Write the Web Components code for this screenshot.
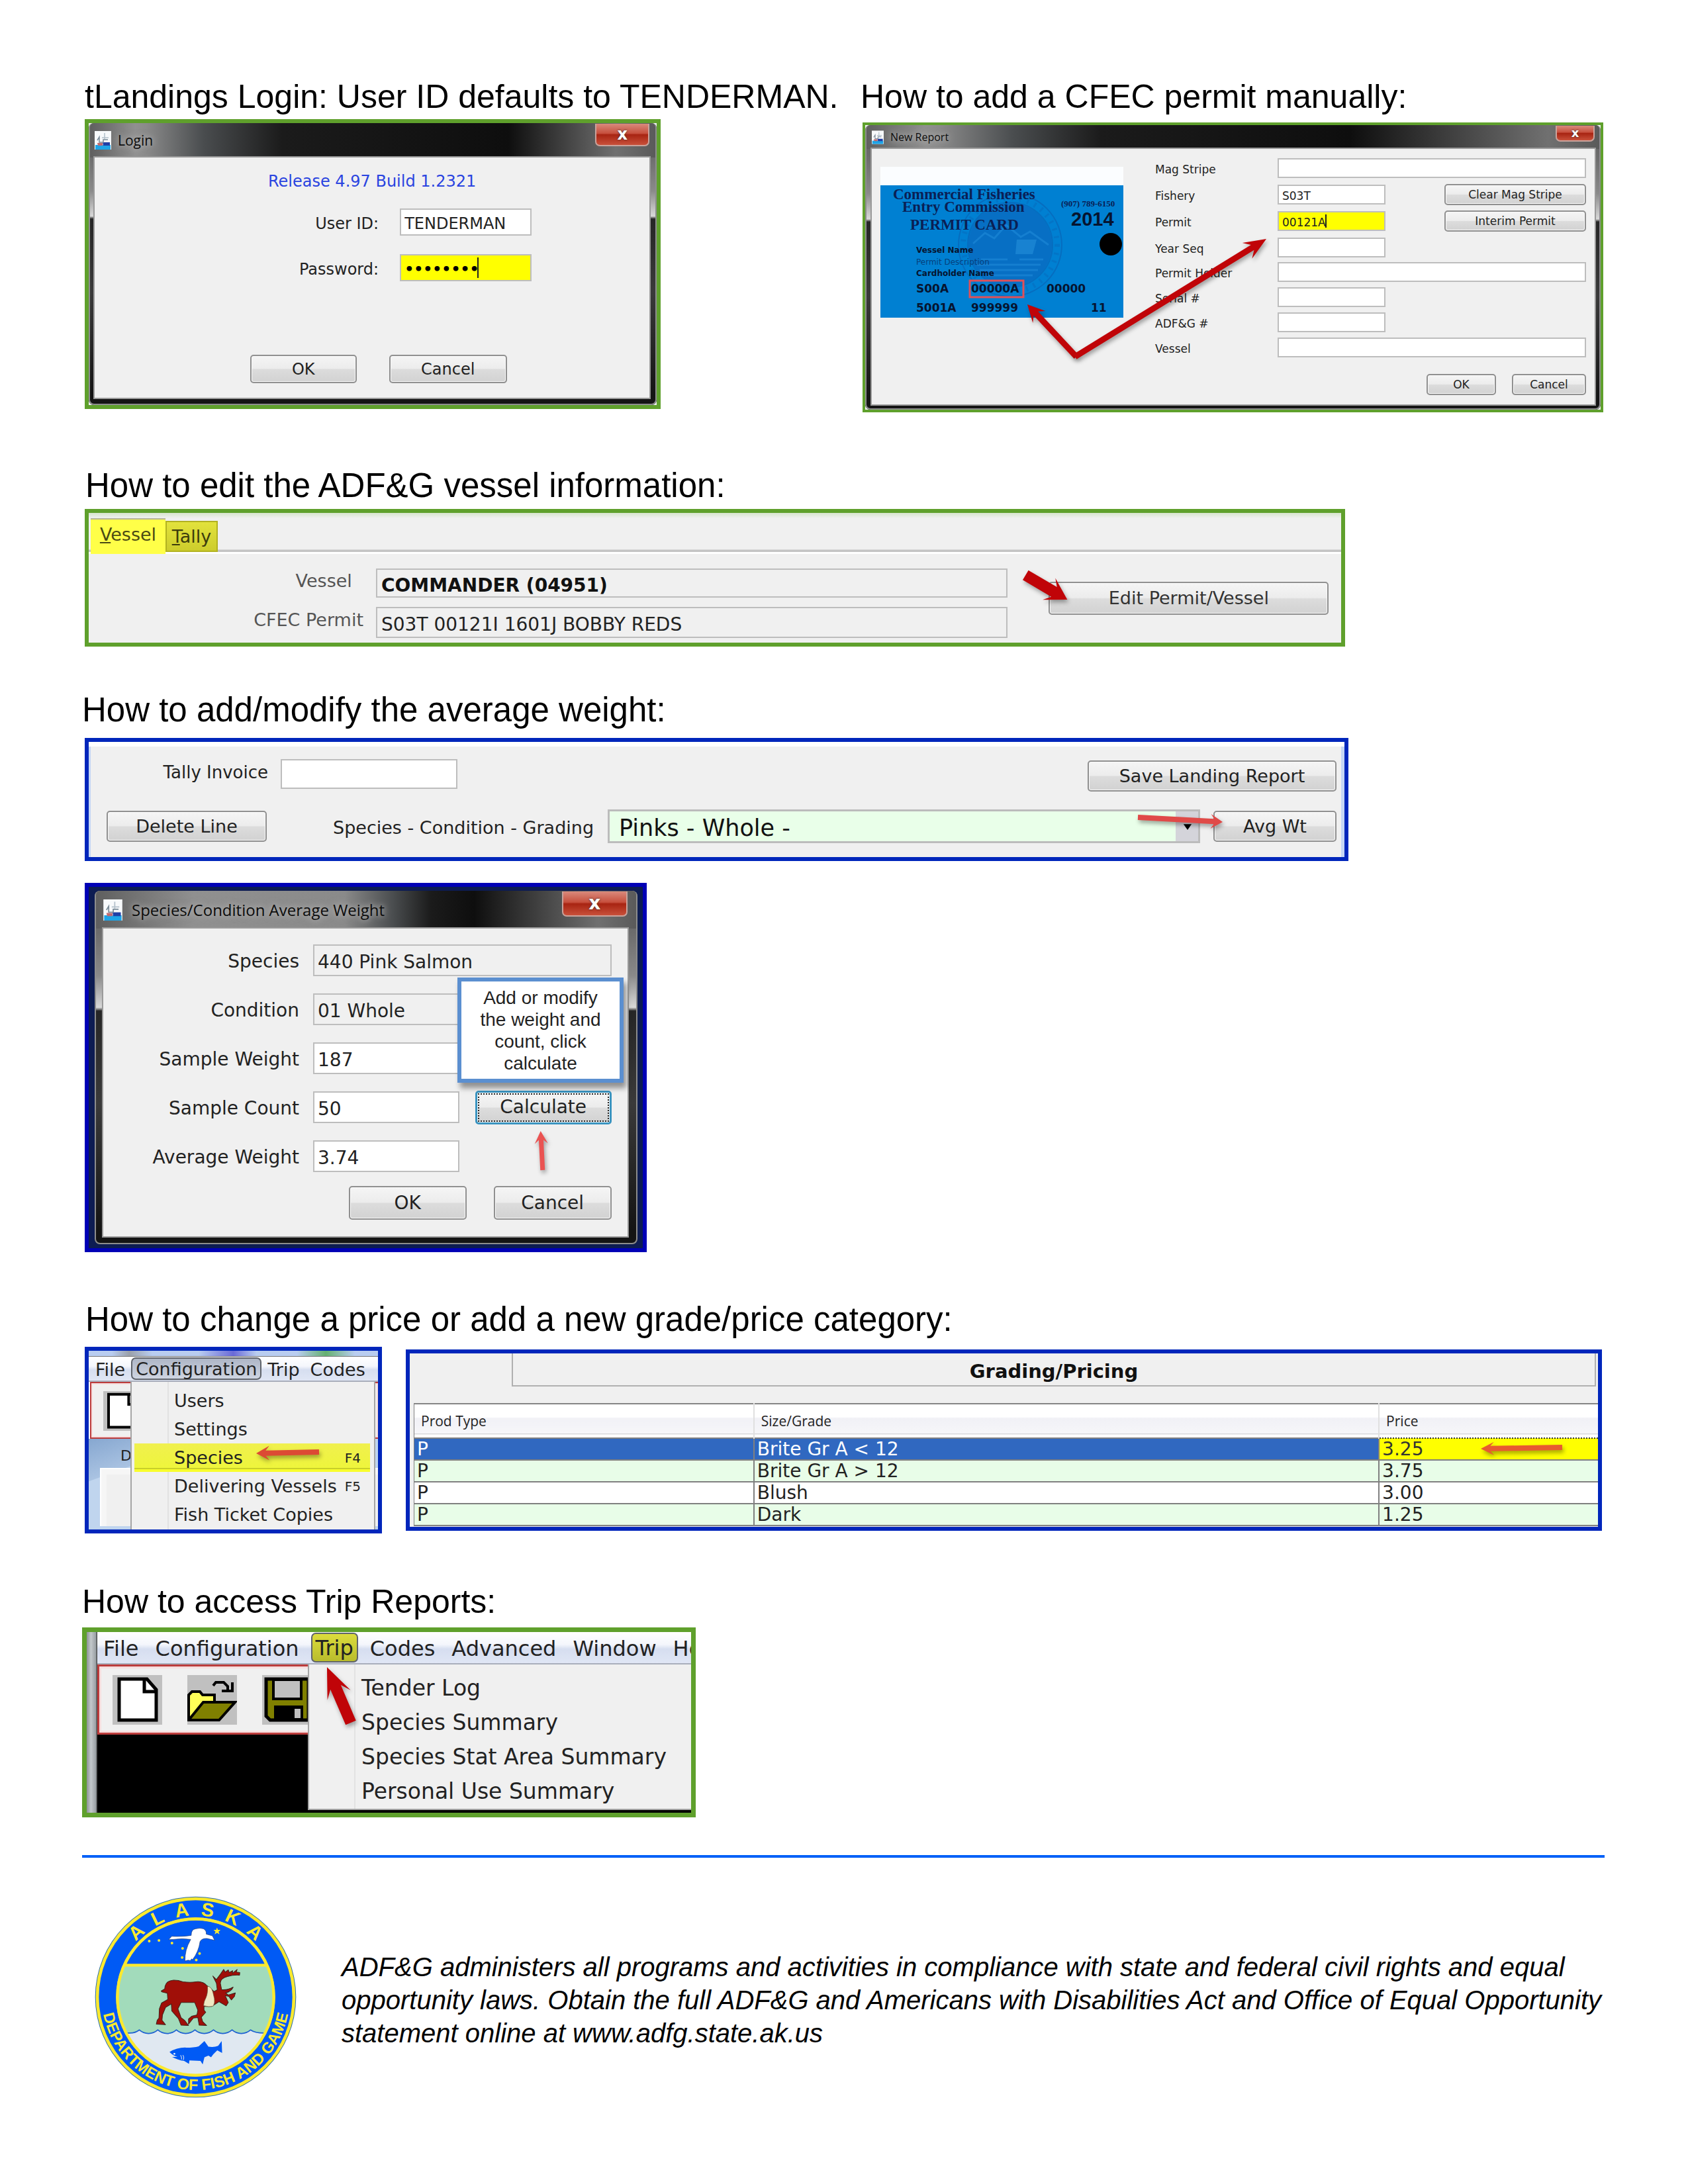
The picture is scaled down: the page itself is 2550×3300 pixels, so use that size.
<!DOCTYPE html>
<html lang="en">
<head>
<meta charset="utf-8">
<title>tLandings Quick Guide</title>
<style>
  body { margin: 0; background: #fff; color: #000; font-family: "Liberation Sans", Arial, sans-serif; }
</style>
</head>
<body>
<guide-page></guide-page>

<script>
const UI_FONT = '"DejaVu Sans", Verdana, sans-serif';
const CAPTION_FONT = '"Open Sans", "Noto Sans", sans-serif';

function define(name, render) {
  customElements.define(name, class extends HTMLElement {
    connectedCallback() {
      if (this.shadowRoot) return;
      this.attachShadow({ mode: 'open' }).innerHTML = render(this, (k, d = '') => this.getAttribute(k) ?? d);
    }
  });
}

/* A heading with the pictures that belong to it. */
define('guide-section', (el, a) => `
<style>
  :host { display: block; }
  h2 { margin: 0 0 var(--gap, 4px); padding-left: var(--indent, 0px); font-size: var(--hs, 50px); line-height: 60px; font-weight: 400; white-space: nowrap; }
</style>
<h2>${a('heading').replace('&', '&amp;')}</h2>
<slot></slot>`);

/* Framed program picture. */
define('shot-frame', () => `
<style>
  :host { display: block; position: relative; box-sizing: border-box; overflow: hidden; border: var(--bw, 6px) solid var(--frame, #5fa02c); background: #f0f0f0; color: #222; font-family: ${UI_FONT}; }
</style>
<slot></slot>`);

define('push-button', () => `
<style>
  :host { display: block; flex: none; }
  button { display: block; box-sizing: border-box; width: 100%; height: var(--bh, 48px); margin: 0; padding: 0; font: inherit; color: inherit; border: 2px solid #909090; border-radius: 5px; background: linear-gradient(#f5f5f5, #ececec 48%, #dcdcdc 52%, #d2d2d2); box-shadow: inset 0 0 0 1px #fafafa; white-space: nowrap; }
  :host([focused]) button { border: 3px solid #3a94c0; outline: 2px dotted #222; outline-offset: -6px; }
</style>
<button type="button"><slot></slot></button>`);

define('text-field', (el, a) => `
<style>
  :host { display: grid; grid-template-columns: var(--cols, auto 1fr); column-gap: var(--cgap, 0px); align-items: center; }
  label { text-align: var(--align, right); white-space: nowrap; padding: var(--lpad, 4px 0 0); }
  .box { position: relative; height: var(--fh, 48px); }
  input { display: block; box-sizing: border-box; width: 100%; height: 100%; margin: 0; padding: var(--ipad, 4px 5px 0); font: inherit; font-size: var(--is, inherit); color: #222; background: #fff; border: 2px solid #bdbdbd; border-radius: 0; }
  input[type=password] { font-size: 22px; font-weight: 700; color: #000; }
  :host([readonly]) input { background: #f0f0f0; }
  :host([active]) input { background: #ff0; }
  :host([strong]) input { font-weight: 700; color: #111; }
  i { position: absolute; width: 2px; top: 5px; bottom: 5px; background: #222; }
</style>
<label for="f">${a('label')}</label>
<div class="box"><input id="f" type="${a('type', 'text')}" value="${a('value')}" ${el.hasAttribute('readonly') ? 'readonly' : ''}>${el.hasAttribute('caret') ? `<i style="left:${a('caret')}px"></i>` : ''}</div>`);

/* Glass-framed program window. */
define('win-dialog', (el, a) => `
<style>
  :host { display: block; position: relative; box-sizing: border-box; padding: 0 var(--pr, 10px) var(--pb, 10px) var(--pl, 10px); border-radius: 8px; box-shadow: inset 0 0 0 2px #8d8d8d; background: linear-gradient(#5c5c5c, #6d6d6d 12%, #8a8a8a 24%, #d8d8d8 33%, #262626 34%, #3a3a3a 60%, #141414 96%); }
  header { display: flex; align-items: center; height: var(--bar, 50px); margin: 0 calc(2px - var(--pr, 10px)) 0 calc(2px - var(--pl, 10px)); padding-left: calc(var(--pl, 10px) - 2px); padding-right: calc(var(--pr, 10px) - 2px); border-radius: 6px 6px 0 0; background: linear-gradient(90deg, #5f5f5f, #909090 var(--glow-a, 8%), #8a8a8a var(--glow-b, 10%), #4a4d4f var(--glow-c, 20%), #1b1b1b var(--dark-a, 34%), #0e0e0e var(--dark-b, 74%), #707070 93%, #5a5a5a); }
  svg { flex: none; width: var(--ico, 25px); height: calc(var(--ico, 25px) + 3px); }
  h3 { flex: 1; margin: 0 0 0 var(--tgap, 10px); font: 400 var(--tsize, 21px)/1 ${CAPTION_FONT}; color: #0c0c0c; white-space: nowrap; text-shadow: 0 0 8px #bbb, 0 0 14px #aaa; }
  .x { align-self: flex-start; box-sizing: border-box; width: var(--xw, 82px); height: var(--xh, 34px); margin: 1px 0 0; padding: 0; border: 2px solid #c9a39c; border-top: 0; border-radius: 0 0 7px 7px; font: 700 var(--xs, 24px)/1 ${UI_FONT}; color: #fff; text-shadow: 0 0 3px #333; background: linear-gradient(#d98a7c, #c7503e 45%, #a82412 52%, #c8503a); }
  .body { position: relative; box-sizing: border-box; background: #f0f0f0; box-shadow: 0 0 0 2px #9a9a9a; }
</style>
<header>
  <svg viewBox="0 0 25 28" aria-hidden="true"><rect width="25" height="28" fill="#f7f9fb"/><path d="M1 21h23v7H1z" fill="#1ea4e6"/><path d="M12 17h11v5H13z" fill="#1f3fa5"/><path d="M4 14l3-5v8h6v-4h7" fill="none" stroke="#7a8b98" stroke-width="1.5"/><path d="M4 18h8v4H5z" fill="#c06a70"/><path d="M15 3v9m-4-2h10" stroke="#b3c0ca" stroke-width="1.5"/></svg>
  <h3>${a('caption')}</h3>
  <button class="x" type="button" aria-label="Close">x</button>
</header>
<div class="body"><slot></slot></div>`);

/* Red pointer drawn over a picture, in the picture's own units. */
define('mark-arrow', (el, a) => {
  const [x1, y1, x2, y2] = a('line').split(' ').map(Number);
  const w = +a('w', 8), L = +a('head', 24), H = +a('spread', 12);
  const d = Math.hypot(x2 - x1, y2 - y1), ux = (x2 - x1) / d, uy = (y2 - y1) / d;
  const p = (t, s) => `${(x1 + ux * t - uy * s).toFixed(1)},${(y1 + uy * t + ux * s).toFixed(1)}`;
  const n = d - L * .72;
  const pts = [p(0, -w / 2), p(n, -w / 2), p(d - L, -H), p(d, 0), p(d - L, H), p(n, w / 2), p(0, w / 2)].join(' ');
  return `
<style>
  :host { display: block; position: absolute; inset: 0; pointer-events: none; }
  svg { display: block; width: 100%; height: 100%; filter: drop-shadow(2px 4px 3px rgba(0,0,0,.35)); }
</style>
<svg viewBox="0 0 ${a('area')}" preserveAspectRatio="none" aria-hidden="true"><polygon points="${pts}" fill="${a('color', '#c00408')}"/></svg>`;
});

define('permit-card', () => `
<style>
  :host { display: block; }
  svg { display: block; width: 100%; }
  text { fill: #061430; }
  .s { font-family: "Liberation Serif", serif; font-weight: 700; fill: #0a1f55; }
  .b { font-family: ${UI_FONT}; font-weight: 700; }
</style>
<svg viewBox="0 0 367 228">
  <rect width="367" height="28" fill="#fbfdff"/>
  <rect y="28" width="367" height="200" fill="#0080d2"/>
  <g fill="none" stroke="#0a62b4" stroke-width="2" opacity=".6">
    <circle cx="196" cy="118" r="78"/><circle cx="196" cy="118" r="64"/>
    <circle cx="196" cy="118" r="71" stroke-width="8" stroke-dasharray="3 9" opacity=".6"/>
  </g>
  <circle cx="196" cy="118" r="63" fill="#0a68bd" opacity=".7"/>
  <path d="M140 116l18-16 14 8 18-20 22 18 14-8 28 20M146 148h96M150 156h88M152 140h40M210 140h36M160 164h70" fill="none" stroke="#1b86d6" stroke-width="3" opacity=".7"/>
  <path d="M206 110h30l-6 22h-26z" fill="#2590da" opacity=".6"/>
  <text class="s" x="19" y="49" font-size="23">Commercial Fisheries</text>
  <text class="s" x="33" y="68" font-size="23">Entry Commission</text>
  <text class="s" x="45" y="95" font-size="23">PERMIT CARD</text>
  <text class="s" x="273" y="60" font-size="13">(907) 789-6150</text>
  <text x="288" y="89" font-family="Liberation Sans, sans-serif" font-weight="700" font-size="29">2014</text>
  <circle cx="348" cy="117" r="17" fill="#000"/>
  <text class="b" x="54" y="130" font-size="12">Vessel Name</text>
  <text x="54" y="148" font-family="DejaVu Sans, sans-serif" font-size="12" style="fill:#06407c">Permit Description</text>
  <text class="b" x="54" y="165" font-size="12">Cardholder Name</text>
  <text class="b" x="54" y="190" font-size="17">S00A</text>
  <text class="b" x="137" y="190" font-size="17">00000A</text>
  <text class="b" x="251" y="190" font-size="17">00000</text>
  <rect x="135" y="172" width="81" height="25" fill="none" stroke="#e05058" stroke-width="3"/>
  <text class="b" x="54" y="219" font-size="17">5001A</text>
  <text class="b" x="137" y="219" font-size="17">999999</text>
  <text class="b" x="318" y="219" font-size="17">11</text>
</svg>`);

define('tab-strip', () => `
<style>
  :host { display: flex; align-items: flex-start; box-sizing: border-box; height: 62px; padding: 8px 0 0 3px; background: linear-gradient(#d7e5cd, #f0f0f0 8px, #f0f0f0 55px, #c4c4c4 56px, #c4c4c4 59px, #fff 59px); font-size: 27px; }
  button { box-sizing: border-box; margin: 0; padding: 0; border: 0; font: inherit; color: #4b4b14; }
  .on { width: 113px; height: 54px; padding-bottom: 8px; background: #ffff48; border-top: 2px solid #b5b596; }
  .off { width: 79px; height: 47px; margin-top: 4px; color: #3c3c0c; background: linear-gradient(#e2e23c, #cdcd2c); border: 2px solid #b2b220; }
</style>
<button class="on" role="tab" type="button"><u>V</u>essel</button><button class="off" role="tab" type="button"><u>T</u>ally</button>`);

define('species-select', () => `
<style>
  :host { display: contents; }
  label { flex: none; min-width: 395px; padding-top: 4px; font-size: 27px; white-space: nowrap; }
  .w { position: relative; flex: 1; height: 51px; }
  select { display: block; appearance: none; box-sizing: border-box; width: 100%; height: 100%; margin: 0; padding: 4px 0 0 14px; border: 3px solid #bcbcbc; border-radius: 0; color: #111; font-family: inherit; font-size: 35px; background: linear-gradient(90deg, #e9ffe9 calc(100% - 34px), #d4d4da calc(100% - 34px)); }
  svg { position: absolute; right: 12px; top: 22px; width: 14px; height: 9px; }
</style>
<label for="s">Species - Condition - Grading</label>
<div class="w"><select id="s"><option>Pinks - Whole -</option></select><svg viewBox="0 0 16 10" aria-hidden="true"><path d="M1 0h14L8 10z"/></svg></div>`);

define('menu-bar', (el, a) => `
<style>
  :host { display: flex; align-items: center; box-sizing: border-box; gap: var(--mgap, 2px); overflow: hidden; border-bottom: 2px solid #a9aebb; background: linear-gradient(#fff, #f4f6fc 40%, #d6def0 55%, #e0e6f5); }
  button { flex: none; margin: 0; padding: 4px 7px 0; height: 94%; border: 0; background: none; font: inherit; color: #222; line-height: 1; }
  .open { padding: 2px 5px 0; border: 2px solid #5f636b; border-radius: 7px; background: var(--open, linear-gradient(#aeb6c6, #cfd5e2)); }
</style>
${a('items').split(',').map(t => `<button type="button"${t === a('open') ? ' class="open"' : ''}>${t}</button>`).join('')}`);

define('menu-popup', (el, a) => `
<style>
  :host { display: block; position: absolute; box-sizing: border-box; background: #f0f0f0; border: 2px solid #a5a5a5; border-top: 0; padding: var(--mp, 7px 6px 0 4px); }
  :host::before { content: ""; position: absolute; top: 0; bottom: 0; left: var(--rail, 54px); width: 2px; background: #e2e2e2; }
  button { position: relative; display: flex; justify-content: space-between; align-items: center; box-sizing: border-box; width: 100%; height: var(--row, 43px); margin: 0; padding: 0 14px 0 var(--ml, 60px); border: 0; background: none; font: inherit; color: #222; white-space: nowrap; text-align: left; }
  kbd { font: 400 20px ${UI_FONT}; }
  .hit { background: linear-gradient(#f0f04e, #eef53c 85%, #c9cf2a 86%, #c9cf2a 90%, #f8fd2c 91%); }
</style>
${a('items').split(',').map(t => { const [n, k] = t.split('|'); return `<button type="button" role="menuitem"${n === a('hit') ? ' class="hit"' : ''}>${n}${k ? `<kbd>${k}</kbd>` : ''}</button>`; }).join('')}`);

const PAGE_ICON = `<rect width="75" height="75" fill="#c0c0c0"/><path d="M10 6h42l14 16v46H10z" fill="#fff" stroke="#000" stroke-width="5"/><path d="M48 6v19h18" fill="none" stroke="#000" stroke-width="5"/>`;

define('config-shot', () => `
<style>
  :host { display: block; }
  .strip { height: 9px; background: linear-gradient(90deg, #b9cdf0 8%, #9aa0aa 14%, #b9cdf0 22%, #b9cdf0 38%, #6a6ad8 50%, #b9cdf0 58%, #b9cdf0 72%, #64b070 82%, #b9cdf0 92%); border-bottom: 1px solid #777; box-sizing: border-box; }
  menu-bar { height: 38px; padding-left: 3px; }
  .below { position: relative; height: 223px; background: #fff; }
  .tool { box-sizing: border-box; height: 86px; margin-left: 2px; padding: 12px 0 0 18px; border: 2px solid #bc3c3c; border-right: 0; box-shadow: inset 0 0 0 2px #f6dede; background: #f0f0f0; }
  .tool svg { display: block; width: 60px; height: 60px; }
  .child { display: grid; grid-template-columns: 60px 1fr; height: 137px; font-size: 22px; background: linear-gradient(160deg, #86a7d0, #aac3e2 60px, #c0d5ee 61px); }
  .child span { padding: 13px 0 0 48px; }
  .panel { grid-column: 1 / 3; margin-left: 17px; height: 88px; background: #f0f0f0; box-shadow: inset 0 2px #fff, inset 2px 0 #fff, inset 12px 12px 0 -2px #f6f6f6; }
  menu-popup { left: 63px; right: 4px; top: 0; bottom: -2px; }
</style>
<div class="strip"></div>
<menu-bar items="File,Configuration,Trip,Codes" open="Configuration"></menu-bar>
<div class="below">
  <div class="tool"><svg viewBox="0 0 75 75" aria-hidden="true">${PAGE_ICON}</svg></div>
  <div class="child"><span>D</span><div class="panel"></div></div>
  <menu-popup items="Users,Settings,Species|F4,Delivering Vessels|F5,Fish Ticket Copies" hit="Species"></menu-popup>
</div>`);

define('trip-shot', () => `
<style>
  :host { display: grid; grid-template-columns: 16px 1fr; background: #000; }
  .edge { background: linear-gradient(90deg, #8c9296, #c3c8cb 40%, #9ba1a5 85%, #333); }
  .main { min-width: 0; position: relative; }
  menu-bar { height: 49px; padding-left: 2px; --mgap: 11px; --open: linear-gradient(#dcdc3c, #b9bc2c); }
  .tool { box-sizing: border-box; display: flex; gap: 38px; height: 106px; padding: 13px 0 0 20px; border: 3px solid #bc3c3c; box-shadow: inset 0 0 0 3px #f6dede; background: #f0f0f0; }
  svg { display: block; width: 75px; height: 75px; }
  .void { height: 118px; background: #000; }
  menu-popup { left: 318px; right: -2px; top: 49px; bottom: 4px; font-size: 33px; --mp: 9px 0 0; --rail: 68px; --row: 52px; --ml: 79px; }
</style>
<div class="edge"></div>
<div class="main">
  <menu-bar items="File,Configuration,Trip,Codes,Advanced,Window,He" open="Trip"></menu-bar>
  <div class="tool">
    <svg viewBox="0 0 75 75" aria-hidden="true">${PAGE_ICON}</svg>
    <svg viewBox="0 0 75 75" aria-hidden="true"><rect width="75" height="75" fill="#c0c0c0"/><path d="M2 68V30l5-5h12l4 5h18v12" fill="#ffff58" stroke="#000" stroke-width="4"/><path d="M2 68l22-27h48L48 68z" fill="#808000" stroke="#000" stroke-width="4"/><path d="M39 16l4-5h12l6 6v6M52 24h16V11" fill="none" stroke="#000" stroke-width="4"/></svg>
    <svg viewBox="0 0 75 75" aria-hidden="true"><rect width="75" height="75" fill="#c0c0c0"/><path d="M6 6h64v62H12l-6-6z" fill="#808000" stroke="#000" stroke-width="5"/><path d="M17 7h42v29H17z" fill="#c0c0c0" stroke="#000" stroke-width="4"/><path d="M18 46h44v24H18z"/><path d="M49 51h9v14h-9z" fill="#c0c0c0"/></svg>
  </div>
  <div class="void"></div>
  <menu-popup items="Tender Log,Species Summary,Species Stat Area Summary,Personal Use Summary"></menu-popup>
</div>`);

define('price-table', () => `
<style>
  :host { display: block; padding-left: 6px; }
  .title { margin: 0 3px 25px 148px; height: 50px; box-sizing: border-box; border: 2px solid #b0b0b0; border-top: 0; font-size: 29px; font-weight: 700; line-height: 54px; text-align: center; color: #111; }
  table { width: 100%; border-collapse: collapse; table-layout: fixed; border-top: 2px solid #858585; font-size: 28px; line-height: 30px; }
  th { height: 52px; box-sizing: border-box; padding: 0 10px; text-align: left; font: 400 21px ${CAPTION_FONT}; color: #222; border-left: 2px solid #e0e0e0; background: linear-gradient(#fff 38%, #f1f1f6 42%, #f6f6f9 88%, #d4d4d8 89%, #fff 92%); }
  td { box-sizing: border-box; height: 33px; padding: 0 4px; border: 2px solid #808080; white-space: nowrap; background: #fff; }
  th:first-child, td:first-child { border-left: 1px solid #808080; }
  td:last-child { border-right: 0; }
  tr:nth-child(even) td { background: #e8fde8; }
  .sel td { background: #3068c0; color: #fff; }
  .sel td:last-child { background: #ff0; color: #333; border-top: 2px dotted #333; border-bottom: 2px dotted #333; }
</style>
<div class="title">Grading/Pricing</div>
<table>
  <colgroup><col style="width:28.7%"><col style="width:52.8%"><col></colgroup>
  <thead><tr><th>Prod Type</th><th>Size/Grade</th><th>Price</th></tr></thead>
  <tbody>
    <tr class="sel"><td>P</td><td>Brite Gr A &lt; 12</td><td>3.25</td></tr>
    <tr><td>P</td><td>Brite Gr A &gt; 12</td><td>3.75</td></tr>
    <tr><td>P</td><td>Blush</td><td>3.00</td></tr>
    <tr><td>P</td><td>Dark</td><td>1.25</td></tr>
  </tbody>
</table>`);

define('agency-seal', () => `
<style>
  :host { display: block; flex: none; width: 305px; }
  svg { display: block; width: 100%; }
  text { font-family: "Liberation Sans", sans-serif; font-weight: 700; fill: #fbe92f; }
</style>
<svg viewBox="71 46 914 914" role="img" aria-label="Alaska Department of Fish and Game">
  <defs>
    <path id="top" d="M159 503a369 369 0 0 1 738 0"/>
    <path id="bot" d="M106 440A426 426 0 1 0 950 440"/>
    <clipPath id="in"><circle cx="528" cy="503" r="350"/></clipPath>
  </defs>
  <circle cx="528" cy="503" r="455" fill="#2c6fb0"/>
  <circle cx="528" cy="503" r="452" fill="#fbe92f"/>
  <circle cx="528" cy="503" r="438" fill="#005af5"/>
  <circle cx="528" cy="503" r="360" fill="#fbe92f"/>
  <g clip-path="url(#in)">
    <circle cx="528" cy="503" r="347" fill="#005af5"/>
    <rect x="170" y="360" width="716" height="310" fill="#a2dbbb"/>
    <path d="M170 668q40-2 61-2q24 0 42-14q18 16 42 16q24 0 42-16q18 16 42 16q24 0 42-16q18 16 42 16q24 0 42-16q18 16 42 16q24 0 42-16q18 16 42 16q24 0 42-16q18 16 42 16q24 0 42-16q20 14 60 14V880H170z" fill="#e0e8f1" stroke="#1e62d2" stroke-width="5"/>
    <path d="M170 359h716" stroke="#fbe92f" stroke-width="13"/>
  </g>
  <circle cx="528" cy="503" r="354" fill="none" stroke="#fbe92f" stroke-width="13"/>
  <text font-size="86" text-anchor="middle"><textPath href="#top" startOffset="50%"><tspan dx="0 50 50 50 50 50">ALASKA</tspan></textPath></text>
  <text font-size="70" text-anchor="middle"><textPath href="#bot" startOffset="50%">DEPARTMENT OF FISH AND GAME</textPath></text>
  <path d="M406 243l14-15q50 2 88-4q0-28 20-30q20-5 36 0q14 8 12 24l28 8 10 20-34-8q-24-2-32 14q-6 46-34 82l-4-4-6 8-10-2-14 4q-2-50 26-98q-40-6-78 0z" fill="#fff" stroke="#26406e" stroke-width="2"/>
  <g fill="#fbe92f"><circle cx="318" cy="250" r="6"/><circle cx="362" cy="247" r="6"/><circle cx="421" cy="259" r="6"/><circle cx="469" cy="283" r="6"/><circle cx="467" cy="324" r="6"/><circle cx="531" cy="335" r="6"/><circle cx="546" cy="306" r="6"/><path d="M625 188l4 11h12l-9 8 4 12-11-7-11 7 4-12-9-8h12z"/></g>
  <path d="M372 476L388 466Q390 430 424 427Q448 426 470 434Q505 438 530 434Q560 430 580 452L612 478L626 470L622 440L606 408L622 424L640 400L655 378L662 390L676 380L680 392L696 384L694 396L716 378L712 390L728 392L727 404Q700 402 672 410Q640 418 640 440L646 470Q674 472 698 458Q690 478 664 484L676 494L708 484L704 500L690 516L678 500L662 496L676 528L666 543L634 524L600 546L566 546L566 562L574 572L554 594L560 614L578 632L544 630L538 596L518 598L496 626L496 602L510 590L534 584L538 562L524 528L462 528L448 556L462 596L478 608L496 632L462 630L450 600L420 566L418 534L392 550L378 584L376 608L392 628L350 626L354 608L362 598L364 556L374 530L402 514L400 486L376 480z" fill="#a00f08" stroke="#40201a" stroke-width="3" stroke-linejoin="round"/>
  <path d="M582 454Q600 456 606 480L613 510Q616 530 608 544Q588 550 564 542Q566 520 574 508Q584 486 582 454z" fill="#efe8c2" stroke="#5a4a30" stroke-width="2"/>
  <path d="M410 752Q446 730 486 732Q520 732 542 726L568 702L586 728Q612 732 630 724L646 702L648 756L626 744L608 762L598 776L586 768L568 776L560 808L550 792L500 790L498 806L476 792Q446 788 422 774L446 774Q424 768 410 752z" fill="#005af5"/>
  <path d="M470 766q8 10 2 22m-12-22q6 10 4 20" fill="none" stroke="#dfe8f1" stroke-width="3"/><circle cx="432" cy="760" r="4" fill="#fff"/>
</svg>`);

define('guide-page', () => `
<style>
  :host { display: block; padding: 116px 126px 80px 124px; }
  .top { display: grid; grid-template-columns: 1176fr 1124fr; align-items: start; }
  shot-frame { margin-left: 4px; }
  .blue { --frame: #0026bb; }
  .row { display: flex; align-items: center; }
  .between { justify-content: space-between; }

  .login { width: 74%; font-size: 24px; line-height: 28px; }
  .login win-dialog { --pl: 9px; --pr: 11px; --pb: 11px; --bar: 52px; }
  .login .pad { padding: 22px 0; }
  .release { margin: 0 0 27px; text-align: center; color: #2a44e0; }
  .login text-field { --cols: 429fr 199fr 146fr; --cgap: 32px; --fh: 41px; margin-bottom: 28px; }
  .login .row { margin: 111px 0 0; padding-left: 28%; gap: 49px; --bh: 43px; }

  .report { --bw: 4px; margin: 0 2px 0 3px; font-size: 17px; line-height: 20px; }
  .report win-dialog { --pl: 10px; --pr: 9px; --pb: 8px; --bar: 36px; --ico: 18px; --tsize: 16px; --xw: 59px; --xh: 24px; --xs: 18px; --dark-a: 32%; --dark-b: 66%; }
  .report .pad { display: grid; grid-template-columns: 367fr 651fr; gap: 0 48px; padding: 14px 13px; align-items: start; --bh: 32px; --align: left; }
  .report permit-card { margin-top: 13px; }
  .report text-field { --cols: 185px 1fr; --fh: 30px; }
  .group { display: grid; gap: 10px; margin-bottom: 7px; }
  .group .row { height: 30px; }
  .group + .group { gap: 8px; margin-bottom: 25px; }
  .short { width: 348px; }
  .actions { display: flex; justify-content: flex-end; }

  .vessel { width: 82.8%; font-size: 27px; line-height: 31px; color: #555; }
  .vessel .pad { display: flex; align-items: center; gap: 62px; padding: 22px 19px 7px 0; --bh: 50px; --lpad: 0 0 8px; --ipad: 6px 6px 0; --is: 28px; }
  .vessel .fields { flex: 1; display: grid; gap: 14px; }
  .vessel text-field { --cols: 415px 1fr; --cgap: 19px; --fh: 44px; }
  .vessel text-field + text-field { --fh: 47px; }
  .vessel push-button { width: 423px; margin-bottom: 16px; color: #333; }

  .tally { width: 83%; font-size: 26px; line-height: 30px; }
  .tally .pad { padding: 26px 12px 21px 27px; box-shadow: inset 0 7px #fff, inset -5px 0 #c5d6f5, inset 3px 0 #c5d6f5; --bh: 47px; }
  .tally .between { height: 49px; align-items: flex-end; }
  .tally .between text-field { align-self: flex-start; }
  .tally .row + .row { margin-top: 27px; }
  .tally text-field { --cols: 244px 267px; --cgap: 19px; --fh: 45px; --lpad: 0 0 5px; }
  .tally push-button { font-size: 27px; }

  .species { --frame: #0000b6; width: 36.9%; margin-top: 33px; font-size: 28px; line-height: 32px; background: #0d1c52; padding: 6px 8px 6px 9px; }
  .species win-dialog { --pl: 13px; --pr: 15px; --pb: 12px; --bar: 57px; --ico: 29px; --tsize: 24px; --tgap: 14px; --xw: 99px; --xh: 38px; --xs: 28px; --glow-a: 18%; --glow-b: 46%; --glow-c: 55%; --dark-a: 62%; --dark-b: 70%; }
  .species .pad { padding: 24px 24px 25px 0; display: grid; gap: 26px; --bh: 51px; --lpad: 4px 0 0; }
  .species text-field { --cols: 296px 221px; --cgap: 21px; }
  .species text-field.wide { --cols: 296px 1fr; }
  .species .row { height: 48px; }
  .species .actions { gap: 41px; margin-top: -5px; }
  .tip { position: absolute; left: 535px; top: 74px; width: 251px; height: 159px; box-sizing: border-box; margin: 0; padding: 8px 0; border: 6px solid #5b8fd0; background: #fff; box-shadow: 4px 8px 8px rgba(0,0,0,.4); font: 28px/33px "Liberation Sans", Arial, sans-serif; text-align: center; color: #222; }

  .prices { display: flex; align-items: flex-start; gap: 36px; font-size: 27px; }
  .menu { width: 449px; flex: none; }
  .grid { flex: 1; margin: 4px 4px 0 0; padding-bottom: 1px; }

  .trip { --bw: 7px; width: 40.3%; margin-left: 0; font-size: 32px; }
  hr { margin: 57px 0 0; border: 0; height: 4px; background: #0060f8; }
  footer { display: flex; align-items: center; gap: 68px; margin: 58px 0 0 19px; }
  footer p { margin: 8px 0 0; font-size: 40px; line-height: 50px; font-style: italic; white-space: nowrap; }
</style>

<div class="top">
  <guide-section heading="tLandings Login: User ID defaults to TENDERMAN." style="--indent:4px">
    <shot-frame class="login">
      <win-dialog caption="Login"><div class="pad">
        <p class="release">Release 4.97 Build 1.2321</p>
        <text-field label="User ID:" value="TENDERMAN"></text-field>
        <text-field label="Password:" type="password" value="tendring" active caret="117"></text-field>
        <div class="row"><push-button style="width:161px">OK</push-button><push-button style="width:178px">Cancel</push-button></div>
      </div></win-dialog>
    </shot-frame>
  </guide-section>
  <guide-section heading="How to add a CFEC permit manually:" style="--gap:9px">
    <shot-frame class="report">
      <win-dialog caption="New Report"><div class="pad">
        <permit-card></permit-card>
        <div>
          <div class="group">
            <text-field label="Mag Stripe"></text-field>
            <div class="row between"><text-field class="short" label="Fishery" value="S03T"></text-field><push-button style="width:214px">Clear Mag Stripe</push-button></div>
            <div class="row between"><text-field class="short" label="Permit" value="00121A" active caret="72"></text-field><push-button style="width:214px">Interim Permit</push-button></div>
            <text-field class="short" label="Year Seq"></text-field>
          </div>
          <div class="group">
            <text-field label="Permit Holder"></text-field>
            <text-field class="short" label="Serial #"></text-field>
            <text-field class="short" label="ADF&amp;G #"></text-field>
            <text-field label="Vessel"></text-field>
          </div>
          <div class="actions" style="gap:24px"><push-button style="width:105px">OK</push-button><push-button style="width:112px">Cancel</push-button></div>
        </div>
      </div></win-dialog>
      <mark-arrow area="1111 430" line="319 350 245 271" w="9" head="26" spread="13"></mark-arrow>
      <mark-arrow area="1111 430" line="317 350 606 172" w="9" head="34" spread="14"></mark-arrow>
    </shot-frame>
  </guide-section>
</div>

<guide-section heading="How to edit the ADF&G vessel information:" style="--hs:51px;--indent:5px;--gap:5px;margin-top:81px">
  <shot-frame class="vessel">
    <tab-strip></tab-strip>
    <div class="pad">
      <div class="fields">
        <text-field label="Vessel&nbsp;&nbsp;" value="COMMANDER (04951)" readonly strong></text-field>
        <text-field label="CFEC Permit" value="S03T 00121I 1601J BOBBY REDS" readonly></text-field>
      </div>
      <push-button>Edit Permit/Vessel</push-button>
    </div>
    <mark-arrow area="1892 196" line="1415 94 1478 131" w="17" head="32" spread="19"></mark-arrow>
  </shot-frame>
</guide-section>

<guide-section heading="How to add/modify the average weight:" style="--hs:51px;--gap:12px;margin-top:66px">
  <shot-frame class="tally blue">
    <div class="pad">
      <div class="row between"><text-field label="Tally Invoice"></text-field><push-button style="width:376px">Save Landing Report</push-button></div>
      <div class="row" style="gap:20px"><push-button style="width:242px;margin-right:80px">Delete Line</push-button><species-select></species-select><push-button style="width:186px">Avg Wt</push-button></div>
    </div>
    <mark-arrow area="1897 174" line="1585 114 1713 121" w="8" head="18" spread="11" color="#e04a48"></mark-arrow>
  </shot-frame>
  <shot-frame class="species">
    <win-dialog caption="Species/Condition Average Weight"><div class="pad">
      <text-field class="wide" label="Species" value="440 Pink Salmon" readonly></text-field>
      <text-field label="Condition" value="01 Whole" readonly></text-field>
      <text-field label="Sample Weight" value="187"></text-field>
      <div class="row between"><text-field label="Sample Count" value="50"></text-field><push-button focused style="width:206px">Calculate</push-button></div>
      <text-field label="Average Weight" value="3.74"></text-field>
      <div class="actions"><push-button style="width:178px">OK</push-button><push-button style="width:178px">Cancel</push-button></div>
    </div>
    <p class="tip">Add or modify<br>the weight and<br>count, click<br>calculate</p>
    </win-dialog>
    <mark-arrow area="837 546" line="686 428 683 369" w="7" head="19" spread="10" color="#ea5352"></mark-arrow>
  </shot-frame>
</guide-section>

<guide-section heading="How to change a price or add a new grade/price category:" style="--hs:51px;--indent:5px;--gap:11px;margin-top:72px">
  <div class="prices">
    <shot-frame class="menu blue"><config-shot></config-shot><mark-arrow area="437 270" line="348 153 253 155" w="8" head="20" spread="11" color="#dc4a34"></mark-arrow></shot-frame>
    <shot-frame class="grid blue"><price-table></price-table><mark-arrow area="1795 262" line="1741 142 1618 144" w="8" head="20" spread="10" color="#e85a30"></mark-arrow></shot-frame>
  </div>
</guide-section>

<guide-section heading="How to access Trip Reports:" style="--gap:9px;margin-top:73px">
  <shot-frame class="trip"><trip-shot></trip-shot><mark-arrow area="913 273" line="399 137 363 53" w="17" head="46" spread="19"></mark-arrow></shot-frame>
</guide-section>

<hr>
<footer>
  <agency-seal></agency-seal>
  <p>ADF&amp;G administers all programs and activities in compliance with state and federal civil rights and equal<br>opportunity laws. Obtain the full ADF&amp;G and Americans with Disabilities Act and Office of Equal Opportunity<br>statement online at www.adfg.state.ak.us</p>
</footer>`);
</script>
</body>
</html>
